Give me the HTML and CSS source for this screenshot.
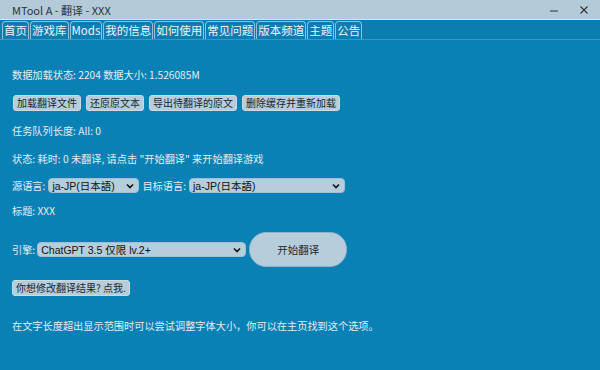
FILE: index.html
```html
<!DOCTYPE html>
<html>
<head>
<meta charset="utf-8">
<link rel="stylesheet" href="styles.css">
</head>
<body>
<div class="app">
  <header class="titlebar">
    <span class="title">MTool A - 翻译 - XXX</span>
    <div class="winctl">
      <svg class="ctl" width="12" height="12" viewBox="0 0 12 12"><path d="M2 7h8" stroke="#333" stroke-width="1"/></svg>
      <svg class="ctl" width="12" height="12" viewBox="0 0 12 12"><path d="M2.5 2.5l7 7M9.5 2.5l-7 7" stroke="#333" stroke-width="1.1"/></svg>
    </div>
  </header>
  <nav class="tabs">
    <span class="tab">首页</span>
    <span class="tab">游戏库</span>
    <span class="tab">Mods</span>
    <span class="tab">我的信息</span>
    <span class="tab">如何使用</span>
    <span class="tab">常见问题</span>
    <span class="tab">版本频道</span>
    <span class="tab">主题</span>
    <span class="tab">公告</span>
  </nav>
  <main class="content">
    <p class="line l1">数据加载状态: 2204 数据大小: 1.526085M</p>
    <div class="btnrow">
      <button class="btn">加载翻译文件</button>
      <button class="btn">还原原文本</button>
      <button class="btn">导出待翻译的原文</button>
      <button class="btn">删除缓存并重新加载</button>
    </div>
    <p class="line l2">任务队列长度: All: 0</p>
    <p class="line l3">状态: 耗时: 0 未翻译, 请点击 "开始翻译" 来开始翻译游戏</p>
    <div class="langrow">
      <span>源语言:</span>
      <div class="sel sel-src">ja-JP(日本語)<svg class="chev" width="8" height="6" viewBox="0 0 8 6"><path d="M1 1.5l3 3 3-3" stroke="#111" stroke-width="1.6" fill="none"/></svg></div>
      <span>目标语言:</span>
      <div class="sel sel-dst">ja-JP(日本語)<svg class="chev" width="8" height="6" viewBox="0 0 8 6"><path d="M1 1.5l3 3 3-3" stroke="#111" stroke-width="1.6" fill="none"/></svg></div>
    </div>
    <p class="line l4">标题: XXX</p>
    <div class="enginerow">
      <span>引擎:</span>
      <div class="sel sel-eng">ChatGPT 3.5 仅限 lv.2+<svg class="chev" width="8" height="6" viewBox="0 0 8 6"><path d="M1 1.5l3 3 3-3" stroke="#111" stroke-width="1.6" fill="none"/></svg></div>
      <button class="start">开始翻译</button>
    </div>
    <div class="editrow"><button class="btn">你想修改翻译结果? 点我.</button></div>
    <p class="line l5">在文字长度超出显示范围时可以尝试调整字体大小，你可以在主页找到这个选项。</p>
  </main>
</div>
</body>
</html>
```
FILE: styles.css
```css
* { box-sizing: border-box; }
html, body { margin: 0; padding: 0; }
body {
  width: 600px; height: 370px; overflow: hidden;
  font-family: "Noto Sans CJK SC", "Liberation Sans", sans-serif;
  font-size: 10.2px;
  background: #0981b4;
}
.app { display: flex; flex-direction: column; height: 370px; }
.titlebar {
  height: 20px; background: #b3cad8;
  display: flex; align-items: center; justify-content: space-between;
  padding: 0 10px 0 12px;
  color: #2a3440; font-size: 11px;
  border-bottom: 1px solid #d6e6ee;
}
.winctl { display: flex; gap: 18px; align-items: center; }
.tabs {
  display: flex; align-items: flex-end; gap: 1px;
  height: 20px; padding: 0 2px;
  background: #0b7db0;
  border-bottom: 1px solid #3e97c2;
}
.tab {
  height: 18px; line-height: 16px; padding: 0 1px;
  border: 1px solid #8fc0dc; border-bottom: none;
  border-radius: 4px 4px 0 0;
  color: #eef4f8; font-size: 11.5px;
}
.content { padding: 0 12px; color: #e3edf3; }
.line { margin: 0; line-height: 14px; }
.l1 { margin-top: 28px; }
.btnrow { display: flex; gap: 5px; margin-top: 13px; padding-left: 1px; }
.btn {
  font-family: "Noto Sans CJK SC", "Liberation Sans", sans-serif;
  font-size: 10px; line-height: 14px; height: 16px;
  padding: 0 3px; margin: 0;
  background: #b6cddc; color: #1c2630;
  border: 1px solid #c8dce8; border-radius: 3px;
}
.l2 { margin-top: 13px; }
.l3 { margin-top: 14px; }
.langrow, .enginerow { display: flex; align-items: center; gap: 3px; }
.langrow { margin-top: 12px; }
.sel {
  display: flex; align-items: center; justify-content: space-between;
  height: 15px; padding: 0 4px 0 3px;
  background: #b6cddc; color: #111;
  border: 1px solid #9cc0d4; border-radius: 4px;
  font-family: "Liberation Sans", "Noto Sans CJK SC", sans-serif;
  font-size: 10.5px;
}
.sel-src { width: 91px; }
.sel-dst { width: 156px; }
.sel-eng { width: 209px; }
.l4 { margin-top: 11px; }
.enginerow { margin-top: 14px; gap: 2px; }
.start {
  width: 98px; height: 35px; margin-left: 1px;
  border-radius: 17px; border: 1px solid #8fb3c8;
  background: #b6cddc; color: #1c2630;
  font-family: "Noto Sans CJK SC", sans-serif; font-size: 10.5px;
}
.editrow { margin-top: 13px; }
.l5 { margin-top: 23px; }
```
